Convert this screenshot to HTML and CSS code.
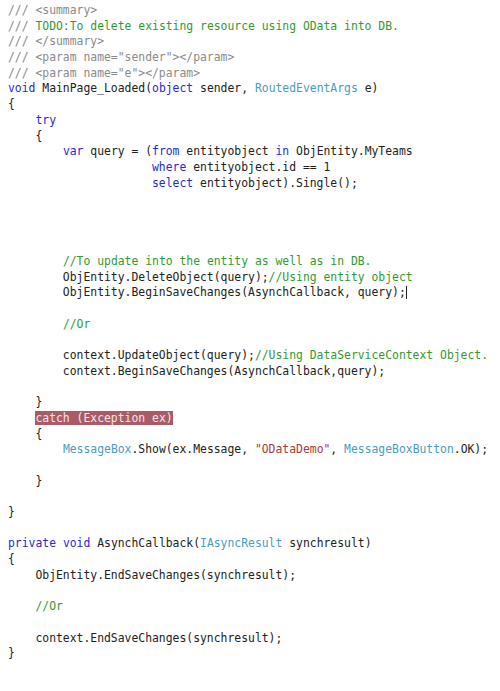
FILE: index.html
```html
<!DOCTYPE html>
<html>
<head>
<meta charset="utf-8">
<link rel="stylesheet" href="styles.css">
</head>
<body>
<div class="code">
<div class="ln"><span class="doc">/// &lt;summary&gt;</span></div>
<div class="ln"><span class="doc">///</span> <span class="cm">TODO:To delete existing resource using OData into DB.</span></div>
<div class="ln"><span class="doc">/// &lt;/summary&gt;</span></div>
<div class="ln"><span class="doc">/// &lt;param name="sender"&gt;&lt;/param&gt;</span></div>
<div class="ln"><span class="doc">/// &lt;param name="e"&gt;&lt;/param&gt;</span></div>
<div class="ln"><span class="kw">void</span> MainPage_Loaded(<span class="kw">object</span> sender, <span class="ty">RoutedEventArgs</span> e)</div>
<div class="ln">{</div>
<div class="ln">    <span class="kw">try</span></div>
<div class="ln">    {</div>
<div class="ln">        <span class="kw">var</span> query = (<span class="kw">from</span> entityobject <span class="kw">in</span> ObjEntity.MyTeams</div>
<div class="ln">                     <span class="kw">where</span> entityobject.id == 1</div>
<div class="ln">                     <span class="kw">select</span> entityobject).Single();</div>
<div class="ln"> </div>
<div class="ln"> </div>
<div class="ln"> </div>
<div class="ln"> </div>
<div class="ln">        <span class="cm">//To update into the entity as well as in DB.</span></div>
<div class="ln">        ObjEntity.DeleteObject(query);<span class="cm">//Using entity object</span></div>
<div class="ln">        ObjEntity.BeginSaveChanges(AsynchCallback, query);<span class="caret"></span></div>
<div class="ln"> </div>
<div class="ln">        <span class="cm">//Or</span></div>
<div class="ln"> </div>
<div class="ln">        context.UpdateObject(query);<span class="cm">//Using DataServiceContext Object.</span></div>
<div class="ln">        context.BeginSaveChanges(AsynchCallback,query);</div>
<div class="ln"> </div>
<div class="ln">    }</div>
<div class="ln">    <span class="hl">catch (Exception ex)</span></div>
<div class="ln">    {</div>
<div class="ln">        <span class="ty">MessageBox</span>.Show(ex.Message, <span class="str">"ODataDemo"</span>, <span class="ty">MessageBoxButton</span>.OK);</div>
<div class="ln"> </div>
<div class="ln">    }</div>
<div class="ln"> </div>
<div class="ln">}</div>
<div class="ln"> </div>
<div class="ln"><span class="kw">private</span> <span class="kw">void</span> AsynchCallback(<span class="ty">IAsyncResult</span> synchresult)</div>
<div class="ln">{</div>
<div class="ln">    ObjEntity.EndSaveChanges(synchresult);</div>
<div class="ln"> </div>
<div class="ln">    <span class="cm">//Or</span></div>
<div class="ln"> </div>
<div class="ln">    context.EndSaveChanges(synchresult);</div>
<div class="ln">}</div>
</div>
</body>
</html>
```
FILE: styles.css
```css
html, body {
  margin: 0;
  padding: 0;
  background: #ffffff;
}
.code {
  padding: 3px 0 0 8px;
  font-family: "DejaVu Sans Mono", "Liberation Mono", monospace;
  font-size: 11.4px;
  line-height: 15.7px;
  color: #222222;
}
.ln {
  white-space: pre;
  height: 15.7px;
}
.doc { color: #8a8a8a; }
.cm { color: #339933; }
.kw { color: #2a2ad0; }
.ty { color: #4a9cbc; }
.str { color: #a83a3a; }
.hl {
  background: #a85c68;
  color: #f4e4e6;
}
.caret {
  display: inline-block;
  width: 1px;
  height: 13px;
  background: #222;
  vertical-align: -3px;
}
```
